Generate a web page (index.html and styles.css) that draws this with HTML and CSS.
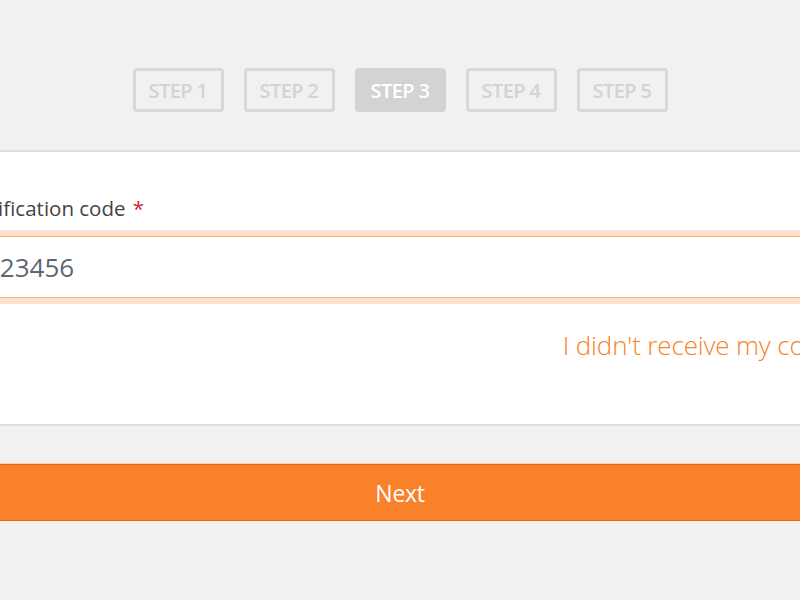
FILE: index.html
```html
<!DOCTYPE html>
<html>
<head>
<meta charset="utf-8">
<link rel="stylesheet" href="styles.css">
</head>
<body>
<nav class="steps">
  <div class="step">STEP 1</div>
  <div class="step">STEP 2</div>
  <div class="step step-active">STEP 3</div>
  <div class="step">STEP 4</div>
  <div class="step">STEP 5</div>
</nav>
<main class="wrap">
  <section class="card">
    <label class="label" for="code">Verification code <span class="req">*</span></label>
    <input class="input" id="code" type="text" value="123456">
    <div class="link-row"><a class="link" href="#">I didn't receive my code</a></div>
  </section>
  <button class="next">Next</button>
</main>
</body>
</html>
```
FILE: styles.css
```css
html, body {
  margin: 0;
  padding: 0;
  background: #f1f1f1;
  overflow: hidden;
  font-family: "Open Sans", "Liberation Sans", sans-serif;
}
.steps {
  display: flex;
  justify-content: center;
  gap: 20px;
  padding-top: 68px;
}
.step {
  box-sizing: border-box;
  width: 91px;
  height: 44px;
  border: 3px solid #d8d8d8;
  border-radius: 4px;
  color: #d3d3d3;
  font-size: 20px;
  font-weight: 600;
  letter-spacing: -0.6px;
  display: flex;
  align-items: center;
  justify-content: center;
}
.step-active {
  background: #d3d3d3;
  border-color: #d3d3d3;
  color: #fff;
}
.wrap {
  width: 900px;
  margin-left: calc(50% - 450px);
  margin-top: 38px;
}
.card {
  background: #fff;
  border-top: 2px solid #dedede;
  border-bottom: 2px solid #dedede;
  padding: 43px 16px 0;
  height: 229px;
}
.label {
  display: block;
  font-size: 20.5px;
  line-height: 26px;
  color: #444;
  margin-bottom: 15px;
}
.req {
  color: #d0213a;
  margin-left: 2px;
}
.input {
  display: block;
  box-sizing: border-box;
  width: 100%;
  height: 62px;
  border: 1px solid #f9b07c;
  box-shadow: 0 0 0 6px #fde1ce;
  outline: none;
  padding: 0 18px;
  font-family: "Open Sans", "Liberation Sans", sans-serif;
  font-size: 26px;
  color: #5d6872;
  background: #fff;
}
.link-row {
  text-align: right;
  padding-top: 29px;
}
.link {
  font-size: 26px;
  font-weight: 300;
  letter-spacing: -0.15px;
  color: #f7822a;
  text-decoration: none;
}
.next {
  display: block;
  width: 100%;
  height: 57px;
  margin-top: 38px;
  background: #f8812a;
  border: 1px solid #e0680f;
  box-shadow: 0 0 0 1px #fbd3b4;
  color: #fff;
  font-family: "Open Sans", "Liberation Sans", sans-serif;
  font-size: 23px;
  letter-spacing: -0.3px;
}
```
